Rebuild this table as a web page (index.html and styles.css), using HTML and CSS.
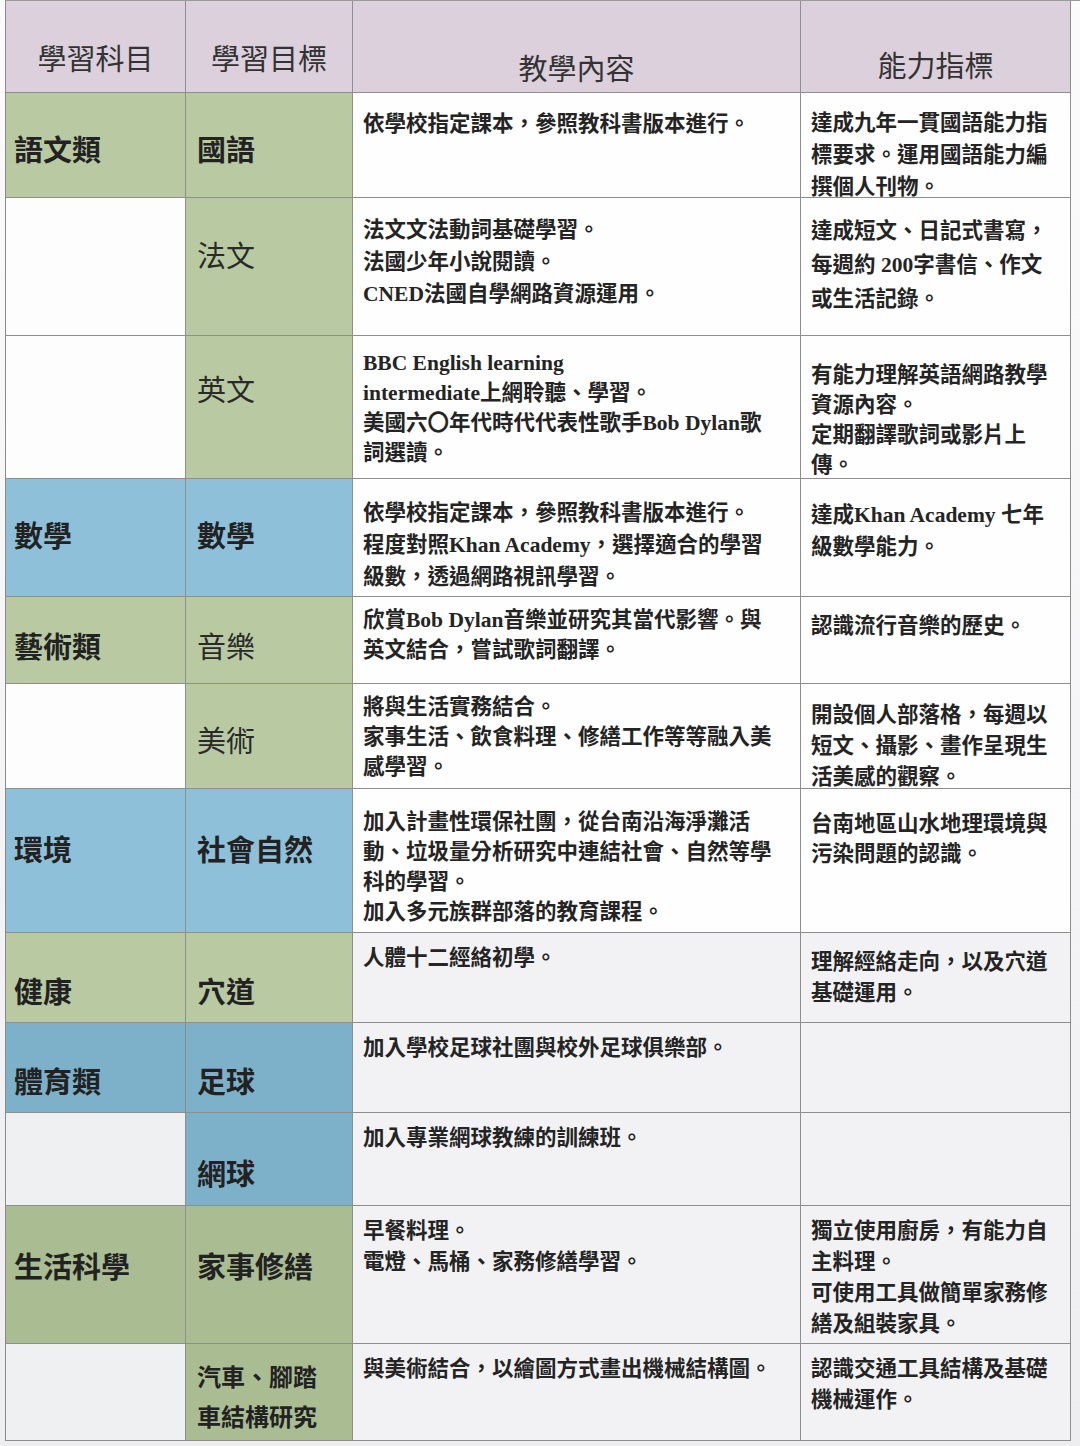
FILE: index.html
```html
<!DOCTYPE html>
<html lang="zh-Hant">
<head>
<meta charset="utf-8">
<title>學習計畫表</title>
<link rel="stylesheet" href="styles.css">
</head>
<body>
<div class="sheet">
  <div class="table">
    <div class="cell head">學習科目</div>
    <div class="cell head">學習目標</div>
    <div class="cell head head-lo">教學內容</div>
    <div class="cell head head-mid">能力指標</div>

    <div class="cell lab green strong dn0">語文類</div>
    <div class="cell lab green strong dn0">國語</div>
    <div class="cell txt p6">依學校指定課本，參照教科書版本進行。</div>
    <div class="cell txt p4 wide">達成九年一貫國語能力指<br>標要求。運用國語能力編<br>撰個人刊物。</div>

    <div class="cell lab white"></div>
    <div class="cell lab green up1">法文</div>
    <div class="cell txt p6 wide">法文文法動詞基礎學習。<br>法國少年小說閱讀。<br>CNED法國自學網路資源運用。</div>
    <div class="cell txt p6 wider">達成短文、日記式書寫，<br>每週約 200字書信、作文<br>或生活記錄。</div>

    <div class="cell lab white"></div>
    <div class="cell lab green up2">英文</div>
    <div class="cell txt tight t4">BBC English learning<br>intermediate上網聆聽、學習。<br>美國六〇年代時代代表性歌手Bob Dylan歌<br>詞選讀。</div>
    <div class="cell txt p14 tight">有能力理解英語網路教學<br>資源內容。<br>定期翻譯歌詞或影片上<br>傳。</div>

    <div class="cell lab blue strong">數學</div>
    <div class="cell lab blue strong">數學</div>
    <div class="cell txt tight t10 wide">依學校指定課本，參照教科書版本進行。<br>程度對照Khan Academy，選擇適合的學習<br>級數，透過網路視訊學習。</div>
    <div class="cell txt p10 wide">達成Khan Academy 七年<br>級數學能力。</div>

    <div class="cell lab green dn1 strong">藝術類</div>
    <div class="cell lab green dn1">音樂</div>
    <div class="cell txt tight">欣賞Bob Dylan音樂並研究其當代影響。與<br>英文結合，嘗試歌詞翻譯。</div>
    <div class="cell txt p4">認識流行音樂的歷史。</div>

    <div class="cell lab white"></div>
    <div class="cell lab green dn0">美術</div>
    <div class="cell txt tight">將與生活實務結合。<br>家事生活、飲食料理、修繕工作等等融入美<br>感學習。</div>
    <div class="cell txt p6">開設個人部落格，每週以<br>短文、攝影、畫作呈現生<br>活美感的觀察。</div>

    <div class="cell lab blue up1 strong">環境</div>
    <div class="cell lab blue up1 strong">社會自然</div>
    <div class="cell txt tight t10">加入計畫性環保社團，從台南沿海淨灘活<br>動、垃圾量分析研究中連結社會、自然等學<br>科的學習。<br>加入多元族群部落的教育課程。</div>
    <div class="cell txt p10 tight">台南地區山水地理環境與<br>污染問題的認識。</div>

    <div class="cell lab green dn2 strong">健康</div>
    <div class="cell lab green dn2 strong">穴道</div>
    <div class="cell txt gray">人體十二經絡初學。</div>
    <div class="cell txt gray p4">理解經絡走向，以及穴道<br>基礎運用。</div>

    <div class="cell lab blue-dk dn2 strong">體育類</div>
    <div class="cell lab blue-dk dn2 strong">足球</div>
    <div class="cell txt gray">加入學校足球社團與校外足球俱樂部。</div>
    <div class="cell txt gray"></div>

    <div class="cell lab white gray"></div>
    <div class="cell lab blue-dk dn2 strong">網球</div>
    <div class="cell txt gray">加入專業網球教練的訓練班。</div>
    <div class="cell txt gray"></div>

    <div class="cell lab green-dk up0 strong">生活科學</div>
    <div class="cell lab green-dk up0 strong">家事修繕</div>
    <div class="cell txt gray">早餐料理。<br>電燈、馬桶、家務修繕學習。</div>
    <div class="cell txt gray">獨立使用廚房，有能力自<br>主料理。<br>可使用工具做簡單家務修<br>繕及組裝家具。</div>

    <div class="cell lab white gray"></div>
    <div class="cell lab green-dk small dn0 strong">汽車、腳踏<br>車結構研究</div>
    <div class="cell txt gray">與美術結合，以繪圖方式畫出機械結構圖。</div>
    <div class="cell txt gray">認識交通工具結構及基礎<br>機械運作。</div>
  </div>
</div>
</body>
</html>
```

FILE: styles.css
```css
html, body {
  margin: 0;
  padding: 0;
  background: #f7f7f8;
}

.sheet {
  width: 1080px;
  height: 1446px;
  overflow: hidden;
  padding-left: 5px;
  box-sizing: border-box;
  background: linear-gradient(180deg, #fbfbfb 0%, #f4f4f6 60%, #eeeef0 100%);
}

.table {
  display: grid;
  grid-template-columns: 180px 167px 448px 270px;
  grid-template-rows: 92px 105px 138px 143px 118px 87px 105px 144px 90px 90px 93px 138px 97px;
  border-left: 1px solid #8a8a8a;
  border-top: 1px solid #9a9a9a;
  font-family: "Liberation Serif", "Noto Sans CJK TC", serif;
  color: #262626;
}

.cell {
  box-sizing: border-box;
  border-right: 1px solid #8e8e8e;
  border-bottom: 1px solid #8e8e8e;
  overflow: hidden;
}

.head {
  background: #dbd0db;
  font-size: 29px;
  font-weight: 400;
  color: #333333;
  display: flex;
  align-items: center;
  justify-content: center;
  padding-top: 20px;
}

.head-lo { padding-top: 40px; }
.head-mid { padding-top: 34px; }

.lab {
  display: flex;
  align-items: center;
  padding-left: 8px;
  font-size: 29px;
  font-weight: 400;
  color: #2a2a2a;
  line-height: 1.2;
}

.lab:nth-child(4n+2) { padding-left: 11px; }

.strong { font-weight: 700; color: #222222; }

.small {
  font-size: 24px;
  line-height: 40px;
}

.green { background: #b9caa2; }
.green-dk { background: #aabc92; }
.blue { background: #8ec0d9; }
.blue-dk { background: #7cb1c9; }
.white { background: #fdfdfd; }
.white.gray { background: #eff0f2; }

.up0 { padding-bottom: 12px; }
.up1 { padding-bottom: 18px; }
.up2 { padding-bottom: 32px; }
.dn0 { padding-top: 12px; }
.dn1 { padding-top: 16px; }
.dn2 { padding-top: 32px; }

.txt {
  background: #fefefe;
  padding: 10px 10px 0 10px;
  font-size: 21.5px;
  line-height: 31px;
  font-weight: 700;
  white-space: nowrap;
  color: #242424;
}

.txt.tight { line-height: 30px; padding-top: 8px; }
.txt.wide { line-height: 32px; }
.txt.wider { line-height: 34px; }
.txt.gray { background: #f2f2f4; }

.txt.p4 { padding-top: 14px; }
.txt.p6 { padding-top: 16px; }
.txt.p10 { padding-top: 20px; }
.txt.p14 { padding-top: 24px; }
.txt.t4 { padding-top: 12px; }
.txt.t10 { padding-top: 18px; }
```
